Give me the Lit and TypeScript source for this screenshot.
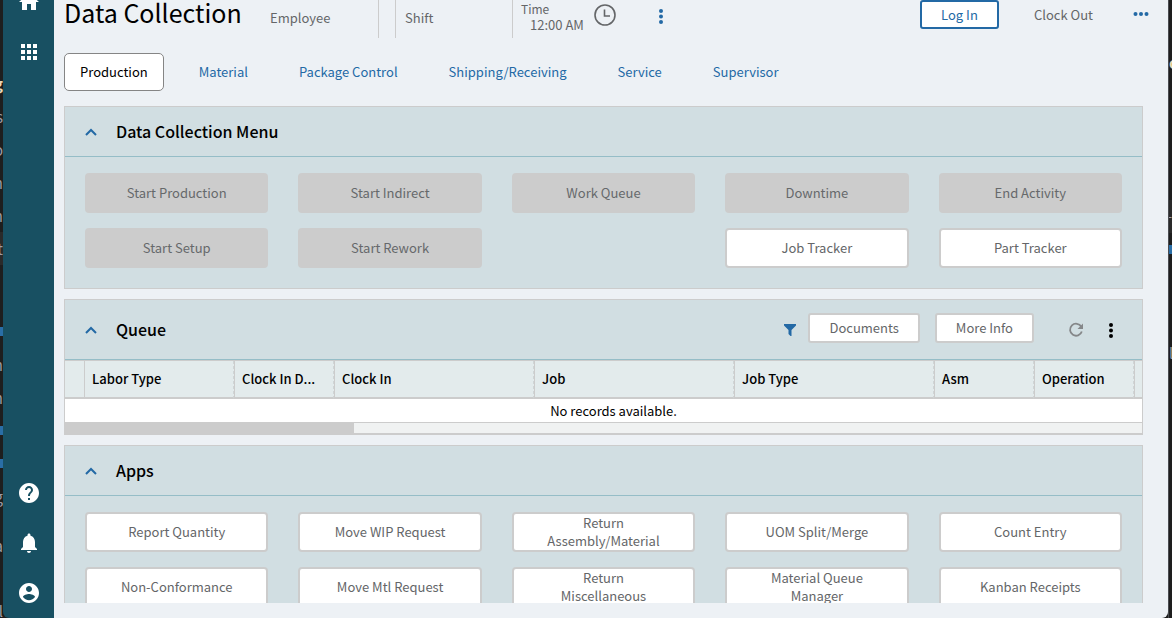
import { LitElement, html, css, svg, nothing, TemplateResult } from "lit";
import { customElement, property, state } from "lit/decorators.js";
import { classMap } from "lit/directives/class-map.js";

interface Action {
  label: string;
  disabled?: boolean;
}

const base = css`
  :host {
    display: block;
    box-sizing: border-box;
  }
  *,
  *::before {
    box-sizing: border-box;
  }
  button,
  input {
    font: inherit;
    color: inherit;
    margin: 0;
    padding: 0;
    border: 0;
    background: none;
  }
  svg {
    display: block;
  }
`;

const icon = (body: TemplateResult) =>
  html`<svg width="24" height="24" viewBox="0 0 24 24" fill="currentColor" aria-hidden="true">${body}</svg>`;

const icons = {
  home: icon(svg`<path d="M10 20v-6h4v6h5v-8h3L12 3 2 12h3v8z"/>`),
  apps: icon(svg`<path d="M4 8h4V4H4v4zm6 12h4v-4h-4v4zm-6 0h4v-4H4v4zm0-6h4v-4H4v4zm6 0h4v-4h-4v4zm6-10v4h4V4h-4zm-6 4h4V4h-4v4zm6 6h4v-4h-4v4zm0 6h4v-4h-4v4z"/>`),
  help: icon(svg`<path d="M12 2C6.48 2 2 6.48 2 12s4.48 10 10 10 10-4.48 10-10S17.520 2 12 2zm1 17h-2v-2h2v2zm2.070-7.750l-.9.920C13.450 12.900 13 13.500 13 15h-2v-.5c0-1.100.450-2.100 1.170-2.830l1.240-1.260c.370-.360.590-.860.590-1.410 0-1.100-.9-2-2-2s-2 .9-2 2H8c0-2.210 1.790-4 4-4s4 1.790 4 4c0 .880-.360 1.680-.930 2.250z"/>`),
  bell: icon(svg`<path d="M12 22c1.100 0 2-.9 2-2h-4c0 1.100.890 2 2 2zm6-6v-5c0-3.070-1.640-5.640-4.500-6.320V4c0-.830-.670-1.500-1.500-1.500s-1.500.670-1.500 1.500v.680C7.630 5.360 6 7.920 6 11v5l-2 2v1h16v-1l-2-2z"/>`),
  account: icon(svg`<path d="M12 2C6.480 2 2 6.480 2 12s4.480 10 10 10 10-4.480 10-10S17.520 2 12 2zm0 3c1.660 0 3 1.340 3 3s-1.340 3-3 3-3-1.340-3-3 1.340-3 3-3zm0 14.200c-2.500 0-4.710-1.280-6-3.220.030-1.990 4-3.080 6-3.080 1.990 0 5.970 1.090 6 3.080-1.290 1.940-3.500 3.220-6 3.220z"/>`),
  clock: icon(svg`<circle cx="12" cy="12" r="10" fill="none" stroke="currentColor" stroke-width="1.600"/><path d="M11.500 6.500V13H17" fill="none" stroke="currentColor" stroke-width="1.600"/>`),
  kebab: icon(svg`<circle cx="12" cy="7" r="2"/><circle cx="12" cy="12.500" r="2"/><circle cx="12" cy="18" r="2"/>`),
  more: icon(svg`<circle cx="6.500" cy="12" r="2"/><circle cx="12" cy="12" r="2"/><circle cx="17.500" cy="12" r="2"/>`),
  filter: icon(svg`<path d="M6 6h12v1.500L13.500 12v6h-1L10.500 16v-4L6 7.500z"/>`),
  refresh: icon(svg`<path d="M17.300 8.800A6 6 0 1 0 17.800 13.500" fill="none" stroke="currentColor" stroke-width="1.800"/><path d="M19 5.500V11h-5.500z"/>`),
  chevron: html`<svg width="12" height="8" viewBox="0 0 12 8" aria-hidden="true"><path d="M1 7l5-5 5 5" fill="none" stroke="currentColor" stroke-width="2"/></svg>`,
};

@customElement("side-nav")
class SideNav extends LitElement {
  static styles = [
    base,
    css`
      :host {
        display: flex;
        flex-direction: column;
        justify-content: space-between;
        width: 51px;
        padding-left: 1px;
        flex: none;
        background: #185062;
        color: #fff;
        border-bottom-left-radius: 6px;
        overflow: hidden;
      }
      .top {
        margin-top: -23px;
      }
      .item {
        display: grid;
        place-items: center;
        width: 100%;
        height: 50px;
      }
    `,
  ];
  private item(label: string, glyph: TemplateResult) {
    return html`<button class="item" aria-label=${label}>${glyph}</button>`;
  }
  render() {
    return html`
      <div class="top">${this.item("Home", icons.home)}${this.item("Applications", icons.apps)}</div>
      <div>
        ${this.item("Help", icons.help)}${this.item("Notifications", icons.bell)}${this.item("Account", icons.account)}
      </div>
    `;
  }
}

@customElement("page-header")
class PageHeader extends LitElement {
  static styles = [
    base,
    css`
      :host {
        display: flex;
        align-items: flex-start;
        height: 38px;
        color: #646668;
      }
      .title {
        margin: 0;
        width: 197px;
        font-size: 25px;
        font-weight: 400;
        line-height: 24px;
        white-space: nowrap;
        color: #000;
      }
      .field {
        height: 38px;
        padding: 0 9px;
        line-height: 36px;
      }
      .field input {
        width: 100%;
        height: 36px;
      }
      .field input::placeholder {
        color: inherit;
        opacity: 1;
      }
      .employee {
        width: 118px;
        border-right: 1px solid #ccc;
        margin-right: 16px;
      }
      .shift {
        width: 117px;
        border-left: 1px solid #ccc;
      }
      .time {
        width: 80px;
        padding: 0 0 0 8px;
        border-left: 1px solid #ccc;
        line-height: 18px;
      }
      .time label {
        display: block;
        font-size: 12px;
        height: 16px;
      }
      .time input {
        display: block;
        height: 18px;
        padding-left: 9px;
      }
      .icon {
        margin-top: 4px;
      }
      .clock {
        margin: 3px 32px 0 1px;
      }
      .blue {
        color: #2369a5;
      }
      .actions {
        display: flex;
        align-items: flex-start;
        margin-left: auto;
      }
      .login {
        width: 79px;
        height: 29px;
        border: 2px solid #2369a5;
        border-radius: 3px;
        background: #fff;
        color: #2369a5;
      }
      .plain {
        height: 29px;
        margin: 0 36px 0 35px;
      }
      .overflow {
        margin: 2px -10px 0 0;
      }
    `,
  ];
  render() {
    return html`
      <h1 class="title">Data Collection</h1>
      <div class="field employee"><input aria-label="Employee" placeholder="Employee" /></div>
      <div class="field shift"><input aria-label="Shift" placeholder="Shift" /></div>
      <div class="field time">
        <label for="time">Time</label>
        <input id="time" value="12:00 AM" />
      </div>
      <button class="icon clock" aria-label="Pick time">${icons.clock}</button>
      <button class="icon blue" aria-label="More fields">${icons.kebab}</button>
      <div class="actions">
        <button class="login">Log In</button>
        <button class="plain">Clock Out</button>
        <button class="overflow blue" aria-label="More actions">${icons.more}</button>
      </div>
    `;
  }
}

@customElement("collapse-panel")
class CollapsePanel extends LitElement {
  static styles = [
    base,
    css`
      :host {
        border: 1px solid #ccc;
        background: #d1dee2;
      }
      .head {
        display: flex;
        align-items: center;
        min-height: 50px;
        padding: 0 19px 0 20px;
        border-bottom: 1px solid #95bdc7;
      }
      .toggle {
        display: grid;
        place-items: center;
        height: 24px;
        color: #2369a5;
      }
      .closed svg {
        transform: rotate(180deg);
      }
      .title {
        margin: 0 auto 0 19px;
        padding-bottom: 2px;
        font-size: 16px;
        font-weight: 500;
        line-height: 24px;
        color: #000;
      }
    `,
  ];
  @property() heading = "";
  @state() private open = true;
  render() {
    return html`
      <header class="head" part="head">
        <button
          class=${classMap({ toggle: true, closed: !this.open })}
          aria-label="Toggle section"
          aria-expanded=${this.open}
          @click=${() => (this.open = !this.open)}
        >
          ${icons.chevron}
        </button>
        <h2 class="title">${this.heading}</h2>
        <slot name="tools"></slot>
      </header>
      ${this.open ? html`<slot></slot>` : nothing}
    `;
  }
}

@customElement("action-grid")
class ActionGrid extends LitElement {
  static styles = [
    base,
    css`
      :host {
        display: grid;
        grid-template-columns: repeat(5, minmax(0, 1fr));
        gap: 15px 30px;
        padding: 16px 20px 20px;
      }
      .action {
        height: 40px;
        padding: 0 30px;
        border: 2px solid #ccc;
        border-radius: 4px;
        background: #fff;
        color: #646668;
        line-height: 18px;
        text-align: center;
      }
      .action:disabled {
        background: #ccc;
        color: #66696b;
      }
    `,
  ];
  @property({ attribute: false }) actions: (Action | null)[] = [];
  render() {
    return this.actions.map((a) =>
      a ? html`<button class="action" ?disabled=${a.disabled}>${a.label}</button>` : html`<span></span>`
    );
  }
}

@customElement("queue-grid")
class QueueGrid extends LitElement {
  static styles = [
    base,
    css`
      .grid {
        overflow: hidden;
        border-top: 1px solid #ccc;
      }
      table {
        width: 100%;
        table-layout: fixed;
        border-collapse: separate;
        border-spacing: 0;
        color: #000;
      }
      th {
        height: 38px;
        padding: 0 7px;
        border-left: 1px solid #ccc;
        border-right: 1px dashed #cfd5d6;
        border-bottom: 2px solid #ccc;
        background: #e3ebec;
        font-weight: 500;
        text-align: left;
        white-space: nowrap;
        overflow: hidden;
      }
      .edge {
        border-left: 0;
        border-right: 0;
      }
      .rest {
        border-right: 0;
        padding: 0;
      }
      td {
        height: 23px;
        padding: 0 0 0 20px;
        background: #fff;
        text-align: center;
        line-height: 23px;
      }
      .w0 {
        width: 19px;
      }
      .w150 {
        width: 150px;
      }
      .w100 {
        width: 100px;
      }
      .w200 {
        width: 200px;
      }
      .track {
        height: 12px;
        border-top: 1px solid #ccc;
        border-bottom: 1px solid #ccc;
        background: #f0f2f2;
      }
      .thumb {
        width: 289px;
        height: 10px;
        background: #ccc;
      }
    `,
  ];
  private columns: [string, string][] = [
    ["Labor Type", "w150"],
    ["Clock In D...", "w100"],
    ["Clock In", "w200"],
    ["Job", "w200"],
    ["Job Type", "w200"],
    ["Asm", "w100"],
    ["Operation", "w100"],
  ];
  render() {
    return html`
      <div class="grid">
        <table>
          <thead>
            <tr>
              <th class="edge w0"></th>
              ${this.columns.map(([label, width]) => html`<th class=${width} scope="col">${label}</th>`)}
              <th class="rest"></th>
            </tr>
          </thead>
          <tbody>
            <tr>
              <td colspan="9">No records available.</td>
            </tr>
          </tbody>
        </table>
        <div class="track"><div class="thumb"></div></div>
      </div>
    `;
  }
}

@customElement("app-root")
class AppRoot extends LitElement {
  static styles = [
    base,
    css`
      :host {
        display: flex;
        height: 100vh;
        overflow: hidden;
        background: #1e1e1e;
        color: #646668;
        font-family: "Noto Sans CJK SC", "Open Sans", sans-serif;
        font-size: 13px;
        line-height: 18px;
      }
      .strip {
        flex: none;
        overflow: hidden;
        color: #9b9ba5;
        font-size: 15px;
      }
      .left {
        display: flex;
        flex-direction: column;
        align-items: flex-end;
        width: 3px;
        padding-top: 67px;
      }
      .right {
        width: 4px;
        border-left: 1px solid #4a4c50;
        padding-top: 46px;
      }
      .row {
        flex: none;
        height: 33px;
        line-height: 33px;
      }
      .strong {
        color: #e8d8b8;
        font-weight: 700;
      }
      .lit {
        width: 100%;
        background: #2a2a2a;
        display: flex;
        justify-content: flex-end;
      }
      .mark {
        flex: none;
        width: 4px;
        height: 9px;
        margin: 12px 0;
        background: #2a6ea6;
      }
      .gap {
        margin-top: 62px;
      }
      .lower {
        margin-top: 16px;
      }
      .lowest {
        margin-top: 32px;
      }
      .drop {
        margin-top: 121px;
      }
      .far {
        margin-top: 82px;
      }
      .main {
        flex: 1;
        min-width: 0;
        display: flex;
        flex-direction: column;
        padding: 0 25px 15px 10px;
        background: #edf1f5;
        border-bottom-right-radius: 6px;
      }
      .tabs {
        display: flex;
        gap: 19px;
        margin: 15px 0;
      }
      .tab {
        height: 38px;
        padding: 0 15px;
        border: 1px solid transparent;
        border-radius: 5px;
        color: #2369a5;
        white-space: nowrap;
      }
      .current {
        border-color: #858585;
        background: #fff;
        color: #000;
      }
      .scroll {
        flex: 1;
        min-height: 0;
        overflow: hidden;
        display: flex;
        flex-direction: column;
        gap: 10px;
      }
      collapse-panel {
        flex: none;
      }
      .queue::part(head) {
        min-height: 60px;
      }
      .tools {
        display: flex;
        align-items: center;
      }
      .filter {
        color: #2369a5;
        margin-right: 6px;
      }
      .tool {
        height: 30px;
        padding: 0 19px;
        margin: 0 15px 3px 0;
        border: 2px solid #ccc;
        border-radius: 3px;
        background: #fff;
      }
      .refresh {
        margin: 0 11px 0 15px;
        color: #858789;
      }
      .menu {
        color: #000;
      }
    `,
  ];

  @state() private tab = "Production";
  private tabs = ["Production", "Material", "Package Control", "Shipping/Receiving", "Service", "Supervisor"];
  private menu: (Action | null)[] = [
    { label: "Start Production", disabled: true },
    { label: "Start Indirect", disabled: true },
    { label: "Work Queue", disabled: true },
    { label: "Downtime", disabled: true },
    { label: "End Activity", disabled: true },
    { label: "Start Setup", disabled: true },
    { label: "Start Rework", disabled: true },
    null,
    { label: "Job Tracker" },
    { label: "Part Tracker" },
  ];
  private apps: Action[] = [
    { label: "Report Quantity" },
    { label: "Move WIP Request" },
    { label: "Return Assembly/Material" },
    { label: "UOM Split/Merge" },
    { label: "Count Entry" },
    { label: "Non-Conformance" },
    { label: "Move Mtl Request" },
    { label: "Return Miscellaneous" },
    { label: "Material Queue Manager" },
    { label: "Kanban Receipts" },
  ];

  render() {
    return html`
      <div class="strip left" aria-hidden="true">
        <span class="row strong">g</span>
        <span class="row">s</span>
        <span class="row">o</span>
        <span class="row">n</span>
        <span class="row">n</span>
        <span class="row lit">t</span>
        <i class="mark gap"></i>
        <span class="row">n</span>
        <span class="row">n</span>
        <i class="mark"></i>
        <i class="mark"></i>
        <span class="row">g</span>
        <span class="row lower">a</span>
        <span class="row lowest">l</span>
      </div>
      <side-nav></side-nav>
      <main class="main">
        <page-header></page-header>
        <nav class="tabs">
          ${this.tabs.map(
            (t) => html`<button
              class=${classMap({ tab: true, current: t === this.tab })}
              aria-pressed=${t === this.tab}
              @click=${() => (this.tab = t)}
            >
              ${t}
            </button>`
          )}
        </nav>
        <div class="scroll">
          <collapse-panel heading="Data Collection Menu">
            <action-grid .actions=${this.menu}></action-grid>
          </collapse-panel>
          <collapse-panel class="queue" heading="Queue">
            <div class="tools" slot="tools">
              <button class="filter" aria-label="Filter">${icons.filter}</button>
              <button class="tool">Documents</button>
              <button class="tool">More Info</button>
              <button class="refresh" aria-label="Refresh">${icons.refresh}</button>
              <button class="menu" aria-label="Queue menu">${icons.kebab}</button>
            </div>
            <queue-grid></queue-grid>
          </collapse-panel>
          <collapse-panel heading="Apps">
            <action-grid .actions=${this.apps}></action-grid>
          </collapse-panel>
        </div>
      </main>
      <div class="strip right" aria-hidden="true">
        <div class="row strong">o</div>
        <div class="row lit drop">+</div>
        <div class="mark"></div>
        <div class="row far">l</div>
      </div>
    `;
  }
}
